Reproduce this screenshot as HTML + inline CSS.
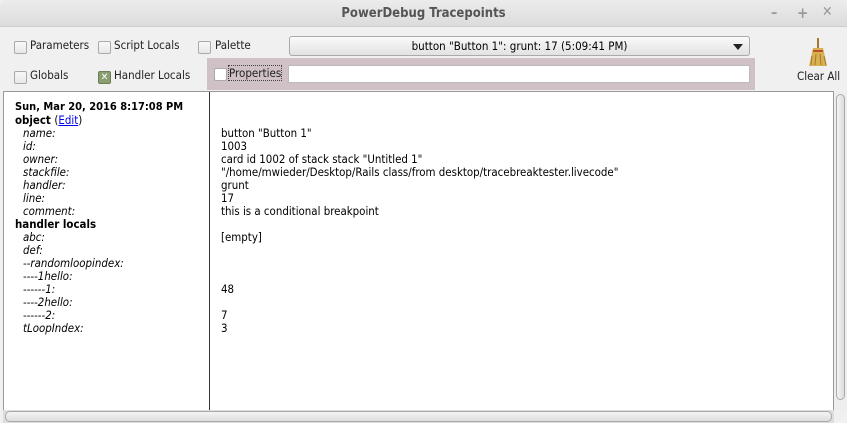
<!DOCTYPE html>
<html><head><style>
*{margin:0;padding:0;box-sizing:border-box}
body{width:847px;height:423px;background:#f0f0f0;font-family:"DejaVu Sans Condensed","DejaVu Sans",sans-serif;font-size:11px;color:#000;position:relative;overflow:hidden}
.a{position:absolute;white-space:nowrap}
.title{left:0;top:0;width:847px;height:27px;background:linear-gradient(#ececec,#dcdcdc);border-bottom:1px solid #cfcfcf;border-radius:5px 5px 0 0}
.title span{position:absolute;left:0;width:847px;text-align:center;top:6px;font-size:13px;font-weight:bold;color:#555}
.cb{position:absolute;width:13px;height:13px;border:1px solid #aaa;border-radius:2px;background:linear-gradient(#f8f8f8,#e8e8e8)}
.lbl{font-size:11.5px;color:#222}
.l{position:absolute;left:23px;font-style:italic;font-size:11.4px}
.v{position:absolute;left:221px;font-size:11.4px}
.b{position:absolute;left:15px;font-weight:bold}
</style></head><body>
<div class="a title"><span>PowerDebug Tracepoints</span>
<div class="a" style="left:771px;top:5px;color:#999;font-size:14px;font-weight:bold">–</div>
<div class="a" style="left:797px;top:4px;color:#999;font-size:15px;font-weight:bold">+</div>
<div class="a" style="left:822px;top:4px;color:#999;font-size:14px;font-weight:bold">✕</div>
</div>
<div class="cb" style="left:14px;top:41px"></div><div class="a lbl" style="left:30px;top:38px">Parameters</div>
<div class="cb" style="left:98px;top:41px"></div><div class="a lbl" style="left:114px;top:38px">Script Locals</div>
<div class="cb" style="left:198px;top:41px"></div><div class="a lbl" style="left:215px;top:38px">Palette</div>
<div class="cb" style="left:14px;top:71px"></div><div class="a lbl" style="left:30px;top:68px">Globals</div>
<div class="cb" style="left:98px;top:71px;background:#8a9e70;border-color:#6c7f55;color:#fff;font-size:10px;line-height:11px;text-align:center;font-weight:bold">✕</div><div class="a lbl" style="left:114px;top:68px">Handler Locals</div>
<div class="a" style="left:289px;top:36px;width:461px;height:20px;border:1px solid #aaa;border-radius:3px;background:linear-gradient(#fafafa,#e2e2e2)"><div style="text-align:center;margin-top:2px;font-size:11.5px">button "Button 1": grunt: 17 (5:09:41 PM)</div><div class="a" style="right:6px;top:7px;border-left:5px solid transparent;border-right:5px solid transparent;border-top:6px solid #222"></div></div>
<div class="a" style="left:207px;top:58px;width:548px;height:32px;background:#cfc1c6"></div>
<div class="cb" style="left:214px;top:68px;background:#fff"></div>
<div class="a lbl" style="left:229px;top:66px;outline:1px dotted #444">Properties</div>
<div class="a" style="left:288px;top:65px;width:462px;height:18px;background:#fff;border:1px solid #bbb"></div>
<div class="a" style="left:807px;top:36px;width:22px;height:32px">
<svg width="22" height="32"><path d="M10 2h2v10h-2z" fill="#a07a30"/><path d="M6 12h10l4 18H2z" fill="#d8b050"/><path d="M6 15h10" stroke="#b03020" stroke-width="1.5"/><path d="M5 20l-1 9M9 18l-1 11M13 18l1 11M17 20l2 9" stroke="#a07a30"/></svg></div>
<div class="a lbl" style="left:797px;top:69px">Clear All</div>
<div class="a" style="left:3px;top:91px;width:831px;height:320px;background:#fff;border:1px solid #999"></div>
<div class="a" style="left:209px;top:92px;width:1px;height:318px;background:#333"></div>
<div class="a" style="left:834px;top:92px;width:13px;height:318px;background:#eee"><div style="margin:2px;height:306px;border:1px solid #aaa;border-radius:5px;background:linear-gradient(90deg,#f4f4f4,#ddd)"></div></div>
<div class="a" style="left:3px;top:410px;width:831px;height:13px;background:#ddd"><div style="margin:1px 2px;height:11px;border:1px solid #aaa;border-radius:5px;background:linear-gradient(#f4f4f4,#ddd)"></div></div>
<div class="b" style="top:100px">Sun, Mar 20, 2016 8:17:08 PM</div>
<div class="b" style="top:113px;font-size:11.4px">object <span style="font-weight:normal">(<span style="color:#00e;text-decoration:underline">Edit</span>)</span></div>
<div class="l" style="top:126px">name:</div><div class="v" style="top:126px">button "Button 1"</div>
<div class="l" style="top:139px">id:</div><div class="v" style="top:139px">1003</div>
<div class="l" style="top:152px">owner:</div><div class="v" style="top:152px">card id 1002 of stack stack "Untitled 1"</div>
<div class="l" style="top:165px">stackfile:</div><div class="v" style="top:165px">"/home/mwieder/Desktop/Rails class/from desktop/tracebreaktester.livecode"</div>
<div class="l" style="top:178px">handler:</div><div class="v" style="top:178px">grunt</div>
<div class="l" style="top:191px">line:</div><div class="v" style="top:191px">17</div>
<div class="l" style="top:204px">comment:</div><div class="v" style="top:204px">this is a conditional breakpoint</div>
<div class="b" style="top:217px;font-size:11.4px">handler locals</div>
<div class="l" style="top:230px">abc:</div><div class="v" style="top:230px">[empty]</div>
<div class="l" style="top:243px">def:</div>
<div class="l" style="top:256px">--randomloopindex:</div>
<div class="l" style="top:269px">----1hello:</div>
<div class="l" style="top:282px">------1:</div><div class="v" style="top:282px">48</div>
<div class="l" style="top:295px">----2hello:</div>
<div class="l" style="top:308px">------2:</div><div class="v" style="top:308px">7</div>
<div class="l" style="top:321px">tLoopIndex:</div><div class="v" style="top:321px">3</div>
</body></html>
